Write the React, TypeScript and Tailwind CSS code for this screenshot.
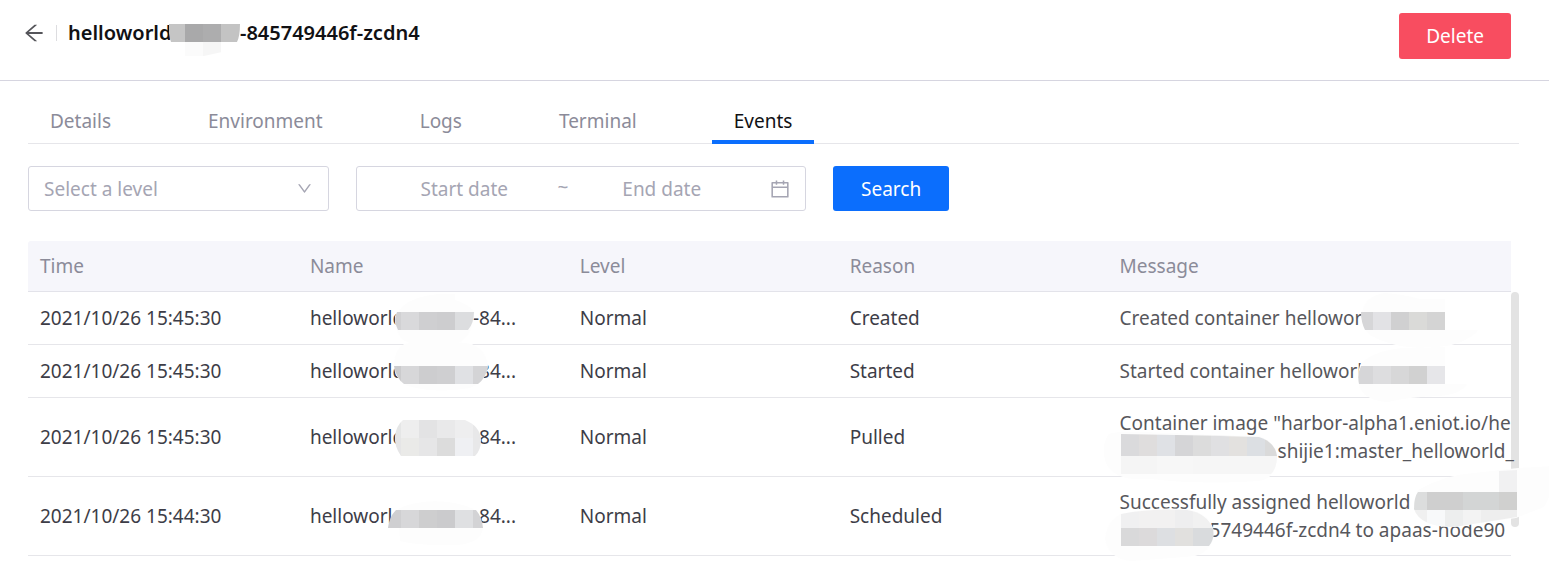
import { useId } from "react";
import type { ReactNode } from "react";
import {
  AiOutlineArrowLeft,
  AiOutlineCalendar,
  AiOutlineDown,
} from "react-icons/ai";

// x, y, width, height, colour
type Block = [number, number, number, number, string];

interface MosaicProps {
  className: string;
  width: number;
  height: number;
  shape: string;
  smudge?: string;
  blocks: Block[];
}

// Pixelated patch that hides part of a name
function Mosaic({ className, width, height, shape, smudge, blocks }: MosaicProps) {
  const id = useId();
  return (
    <svg
      className={`absolute pointer-events-none overflow-visible ${className}`}
      width={width}
      height={height}
      viewBox={`0 0 ${width} ${height}`}
      aria-hidden="true"
    >
      <clipPath id={id}>
        <path d={shape} />
      </clipPath>
      {smudge && <path d={smudge} fill="#fdfdfd" />}
      <g clipPath={`url(#${id})`} shapeRendering="crispEdges">
        {blocks.map(([x, y, w, h, fill], i) => (
          <rect key={i} x={x} y={y} width={w} height={h} fill={fill} />
        ))}
      </g>
    </svg>
  );
}

interface EventRow {
  time: string;
  tail: string;
  level: string;
  reason: string;
  message: ReactNode;
  nameMask: ReactNode;
  messageMask: ReactNode;
}

const events: EventRow[] = [
  {
    time: "2021/10/26 15:45:30",
    tail: "-84...",
    level: "Normal",
    reason: "Created",
    message: "Created container hellowor",
    nameMask: (
      <Mosaic
        className="left-[97px] top-0"
        width={80}
        height={56}
        shape="M2 20H79Q79 31 73 38H3Q-2 28 2 20Z"
        smudge="M8 14Q20 4 44 2H60V8Q78 14 79 22Q77 46 60 53Q30 60 8 48Q-1 38 0 24Z"
        blocks={[
          [0, 20, 6, 18, "#d1d1d3"],
          [6, 20, 18, 18, "#d9d9db"],
          [24, 20, 18, 18, "#cfcfd1"],
          [42, 20, 18, 18, "#cdcdcf"],
          [60, 20, 20, 18, "#dcdddf"],
        ]}
      />
    ),
    messageMask: (
      <Mosaic
        className="left-[252px] top-0"
        width={120}
        height={56}
        shape="M1 20H85V38H5Q1 30 1 20Z"
        smudge="M2 20Q6 4 24 1Q42 2 60 7H85V38H118Q108 50 86 54Q40 60 12 44Q-1 34 2 20Z"
        blocks={[
          [0, 20, 13, 18, "#d6d6d8"],
          [13, 20, 18, 18, "#e2e2e5"],
          [31, 20, 18, 18, "#d0d0d1"],
          [49, 20, 18, 18, "#dadad8"],
          [67, 20, 18, 18, "#d4d4d4"],
        ]}
      />
    ),
  },
  {
    time: "2021/10/26 15:45:30",
    tail: "-84...",
    level: "Normal",
    reason: "Started",
    message: "Started container helloworl",
    nameMask: (
      <Mosaic
        className="left-[96px] top-0"
        width={94}
        height={46}
        shape="M0 21H94Q92 33 84 39H10Q2 33 0 21Z"
        smudge="M10 -1Q40 -7 78 -1Q92 6 94 20Q93 36 76 43Q42 49 14 41Q0 34 0 20Q0 6 10 -1Z"
        blocks={[
          [0, 21, 7, 18, "#cbcbcd"],
          [7, 21, 18, 18, "#d7d7d9"],
          [25, 21, 18, 18, "#cdcdcf"],
          [43, 21, 18, 18, "#cfcfd1"],
          [61, 21, 18, 18, "#e0e1e4"],
          [79, 21, 15, 18, "#d4d4d6"],
        ]}
      />
    ),
    messageMask: (
      <Mosaic
        className="left-[250px] top-0"
        width={110}
        height={58}
        shape="M3 21H87V39H1Q-1 29 3 21Z"
        smudge="M2 20Q14 6 44 3L87 2V39H109Q102 50 80 51Q50 52 30 57Q6 56 1 40Q-1 30 2 20Z"
        blocks={[
          [0, 21, 15, 18, "#d6d6d8"],
          [15, 21, 18, 18, "#dddddf"],
          [33, 21, 18, 18, "#d7d7d8"],
          [51, 21, 18, 18, "#d1d1d1"],
          [69, 21, 18, 18, "#e6e6e9"],
        ]}
      />
    ),
  },
  {
    time: "2021/10/26 15:45:30",
    tail: "-84...",
    level: "Normal",
    reason: "Pulled",
    message: (
      <>
        <span className="block">Container image "harbor-alpha1.eniot.io/he</span>
        <span className="block pl-[158px]">shijie1:master_helloworld_</span>
      </>
    ),
    nameMask: (
      <Mosaic
        className="left-[97px] top-0"
        width={86}
        height={60}
        shape="M8 22H70Q85 28 86 42Q86 52 80 58H6Q-1 48 0 38Q1 28 8 22Z"
        blocks={[
          [0, 22, 6, 18, "#e5e6e6"],
          [6, 22, 18, 18, "#eeeeee"],
          [24, 22, 18, 18, "#e3e3e4"],
          [42, 22, 18, 18, "#e9e9ea"],
          [60, 22, 18, 18, "#eeeeef"],
          [78, 22, 8, 18, "#e8e8e9"],
          [0, 40, 6, 18, "#e5e5e6"],
          [6, 40, 18, 18, "#eaeae8"],
          [24, 40, 18, 18, "#e6e6e7"],
          [42, 40, 18, 18, "#dcdcdc"],
          [60, 40, 18, 18, "#eff0f3"],
          [78, 40, 8, 18, "#e8e8e9"],
        ]}
      />
    ),
    messageMask: (
      <Mosaic
        className="left-[13px] top-0"
        width={158}
        height={84}
        shape="M0 36Q70 37 138 39Q154 44 156 58Q156 70 150 76H0Z"
        smudge="M-12 36Q-4 33 22 34L100 37L138 38Q155 44 156 58Q156 80 138 83Q80 87 30 81Q-10 84 -16 62Q-20 46 -12 36Z"
        blocks={[
          [0, 34, 18, 24, "#dadadc"],
          [18, 34, 18, 24, "#dfdddd"],
          [36, 34, 18, 24, "#dfe1e5"],
          [54, 34, 18, 24, "#d5d5d7"],
          [72, 34, 18, 24, "#dcdcdc"],
          [90, 34, 18, 24, "#e0e0e2"],
          [108, 34, 18, 24, "#e3e1df"],
          [126, 34, 18, 24, "#dcdfe3"],
          [144, 34, 14, 24, "#dadada"],
          [0, 58, 36, 18, "#f5f5f5"],
          [36, 58, 36, 18, "#f7f7f7"],
          [72, 58, 86, 18, "#f6f6f6"],
        ]}
      />
    ),
  },
  {
    time: "2021/10/26 15:44:30",
    tail: "-84...",
    level: "Normal",
    reason: "Scheduled",
    message: (
      <>
        <span className="block">Successfully assigned helloworld</span>
        <span className="block pl-[90px]">5749446f-zcdn4 to apaas-node90</span>
      </>
    ),
    nameMask: (
      <Mosaic
        className="left-[90px] top-0"
        width={96}
        height={70}
        shape="M8 33H88Q94 40 95 51H0Q1 40 8 33Z"
        smudge="M10 32Q30 22 60 25Q80 28 88 34L95 52Q92 66 70 68Q30 69 12 64Z"
        blocks={[
          [0, 33, 13, 18, "#cfcfd1"],
          [13, 33, 18, 18, "#d7d7d9"],
          [31, 33, 18, 18, "#cececf"],
          [49, 33, 18, 18, "#cbcbcd"],
          [67, 33, 18, 18, "#dfe0e2"],
          [85, 33, 11, 18, "#d3d3d5"],
        ]}
      />
    ),
    messageMask: (
      <>
        <Mosaic
          className="left-[13px] top-0"
          width={94}
          height={84}
          shape="M0 37Q30 31 66 33Q86 36 92 52Q94 62 88 69H0Z"
          smudge="M0 37Q30 30 66 32Q88 36 93 54Q92 74 74 79Q40 82 10 84Q-12 82 -16 62Q-14 44 0 37Z"
          blocks={[
            [0, 30, 18, 21, "#f0f0f1"],
            [18, 30, 36, 21, "#f2f1f1"],
            [54, 30, 18, 21, "#eeeeef"],
            [72, 30, 22, 21, "#f1f1f1"],
            [0, 51, 18, 18, "#d9d9da"],
            [18, 51, 18, 18, "#dcdadb"],
            [36, 51, 18, 18, "#dddfe2"],
            [54, 51, 18, 18, "#e1e0de"],
            [72, 51, 22, 18, "#d9dbdd"],
          ]}
        />
        <Mosaic
          className="left-[306px] top-0"
          width={130}
          height={54}
          shape="M4 15L30 4L85 -6L103 -7V40L40 50Q6 50 0 32Q0 20 4 15Z"
          smudge="M4 13Q30 -2 60 -4L104 -9L138 -11Q142 10 130 30L102 41L40 50Q6 50 0 32Q0 20 4 13Z"
          blocks={[
            [85, -9, 18, 24, "#f1f1f2"],
            [0, 15, 13, 18, "#dcdddd"],
            [13, 15, 36, 18, "#cfcfcf"],
            [49, 15, 36, 18, "#d3d5d5"],
            [85, 15, 18, 18, "#d0d0cf"],
            [0, 33, 13, 18, "#f0f0f0"],
            [13, 33, 18, 18, "#f8f9fa"],
            [31, 33, 18, 18, "#edeeee"],
            [49, 33, 18, 18, "#f3f3f3"],
            [67, 33, 36, 18, "#eeeeee"],
          ]}
        />
      </>
    ),
  },
];

const tabs = ["Details", "Environment", "Logs", "Terminal", "Events"];
const columns = ["Time", "Name", "Level", "Reason", "Message"];

export default function App() {
  return (
    <div className="min-h-screen bg-white font-['Noto_Sans','Open_Sans',sans-serif] text-[19px] leading-7 text-[#3d3d47]">
      {/* Header */}
      <header className="flex items-start justify-between border-b border-[#d6d5e0] pt-[13px] pb-[21px] pl-[22px] pr-[38px]">
        <div className="flex items-center pt-[6px]">
          <button aria-label="Back" className="text-[#55555a]">
            <AiOutlineArrowLeft size={24} />
          </button>
          <span className="ml-[10px] h-4 w-px bg-[#dddde0]" />
          <h1 className="relative ml-[11px] flex text-[20px] font-semibold text-[#111114]">
            <span className="w-[172px]">helloworld</span>
            <span>-845749446f-zcdn4</span>
            <Mosaic
              className="left-[101px] top-0"
              width={72}
              height={40}
              shape="M0 5H71Q71 17 68 23H53V33L35 37H16V23H2Q-1 14 0 5Z"
              blocks={[
                [0, 5, 16, 18, "#c5c5c5"],
                [16, 5, 18, 18, "#a9a9aa"],
                [34, 5, 18, 18, "#adadae"],
                [52, 5, 20, 18, "#c3c3c3"],
                [16, 23, 18, 14, "#fbfbfb"],
                [34, 23, 18, 14, "#f6f6f6"],
              ]}
            />
          </h1>
        </div>
        <button className="h-[46px] rounded-[3px] bg-[#f84d60] px-[27px] text-white">
          Delete
        </button>
      </header>

      <main className="pt-[17px] pl-7 pr-[30px]">
        {/* Tabs */}
        <nav className="flex gap-[53px] border-b border-[#e6e6ea]" role="tablist">
          {tabs.map((tab) => (
            <button
              key={tab}
              role="tab"
              aria-selected={tab === "Events"}
              className={
                tab === "Events"
                  ? "-mb-px border-b-4 border-[#0b6efd] px-[22px] pt-[9px] pb-[5px] text-[#111114]"
                  : "-mb-px border-b-4 border-transparent px-[22px] pt-[9px] pb-[5px] text-[#8b8b99]"
              }
            >
              {tab}
            </button>
          ))}
        </nav>

        {/* Filters */}
        <div className="mt-[22px] flex gap-[27px]">
          <div className="relative w-[301px]">
            <select
              aria-label="Level"
              defaultValue=""
              className="h-[45px] w-full appearance-none rounded-[3px] border border-[#d6d6e0] bg-white px-[15px] text-[#a5a5b3]"
            >
              <option value="">Select a level</option>
              <option>Normal</option>
              <option>Warning</option>
            </select>
            <AiOutlineDown
              size={17}
              className="pointer-events-none absolute right-4 top-[14px] text-[#a5a5b3]"
            />
          </div>
          <div className="flex h-[45px] w-[450px] items-center rounded-[3px] border border-[#d6d6e0] px-[14px] text-[#a5a5b3]">
            <input
              aria-label="Start date"
              placeholder="Start date"
              className="min-w-0 flex-1 text-center outline-none placeholder:text-[#a5a5b3]"
            />
            <span className="w-[11px] pb-1 text-center">~</span>
            <input
              aria-label="End date"
              placeholder="End date"
              className="min-w-0 flex-1 text-center outline-none placeholder:text-[#a5a5b3]"
            />
            <AiOutlineCalendar size={22} className="ml-[14px]" />
          </div>
          <button className="h-[45px] rounded-[3px] bg-[#0b6efd] px-7 text-white">
            Search
          </button>
        </div>

        {/* Events */}
        <div className="relative mt-[30px] pr-2">
          <div className="absolute right-0 top-[51px] h-[235px] w-2 rounded-full bg-[#e3e3e3]" />
          <table className="w-full table-fixed border-separate border-spacing-0 text-left">
            <thead>
              <tr className="h-[51px] bg-[#f6f6fb] text-[#8b8b99]">
                {columns.map((column) => (
                  <th
                    key={column}
                    className="w-[18.2%] border-b border-[#e3e3ea] px-3 font-normal first:rounded-tl-[3px] last:w-auto"
                  >
                    {column}
                  </th>
                ))}
              </tr>
            </thead>
            <tbody>
              {events.map((event) => (
                <tr key={event.reason} className="h-[53px]">
                  <td className="border-b border-[#e6e6ea] px-3">{event.time}</td>
                  <td className="relative border-b border-[#e6e6ea] px-3">
                    <div className="flex">
                      <span className="w-[163px]">helloworld</span>
                      <span>{event.tail}</span>
                    </div>
                    {event.nameMask}
                  </td>
                  <td className="border-b border-[#e6e6ea] px-3">{event.level}</td>
                  <td className="border-b border-[#e6e6ea] px-3">{event.reason}</td>
                  <td className="relative border-b border-[#e6e6ea] py-[11px] pl-3 text-[#57575c]">
                    <div className="whitespace-nowrap">{event.message}</div>
                    {event.messageMask}
                  </td>
                </tr>
              ))}
            </tbody>
          </table>
        </div>
      </main>
    </div>
  );
}
